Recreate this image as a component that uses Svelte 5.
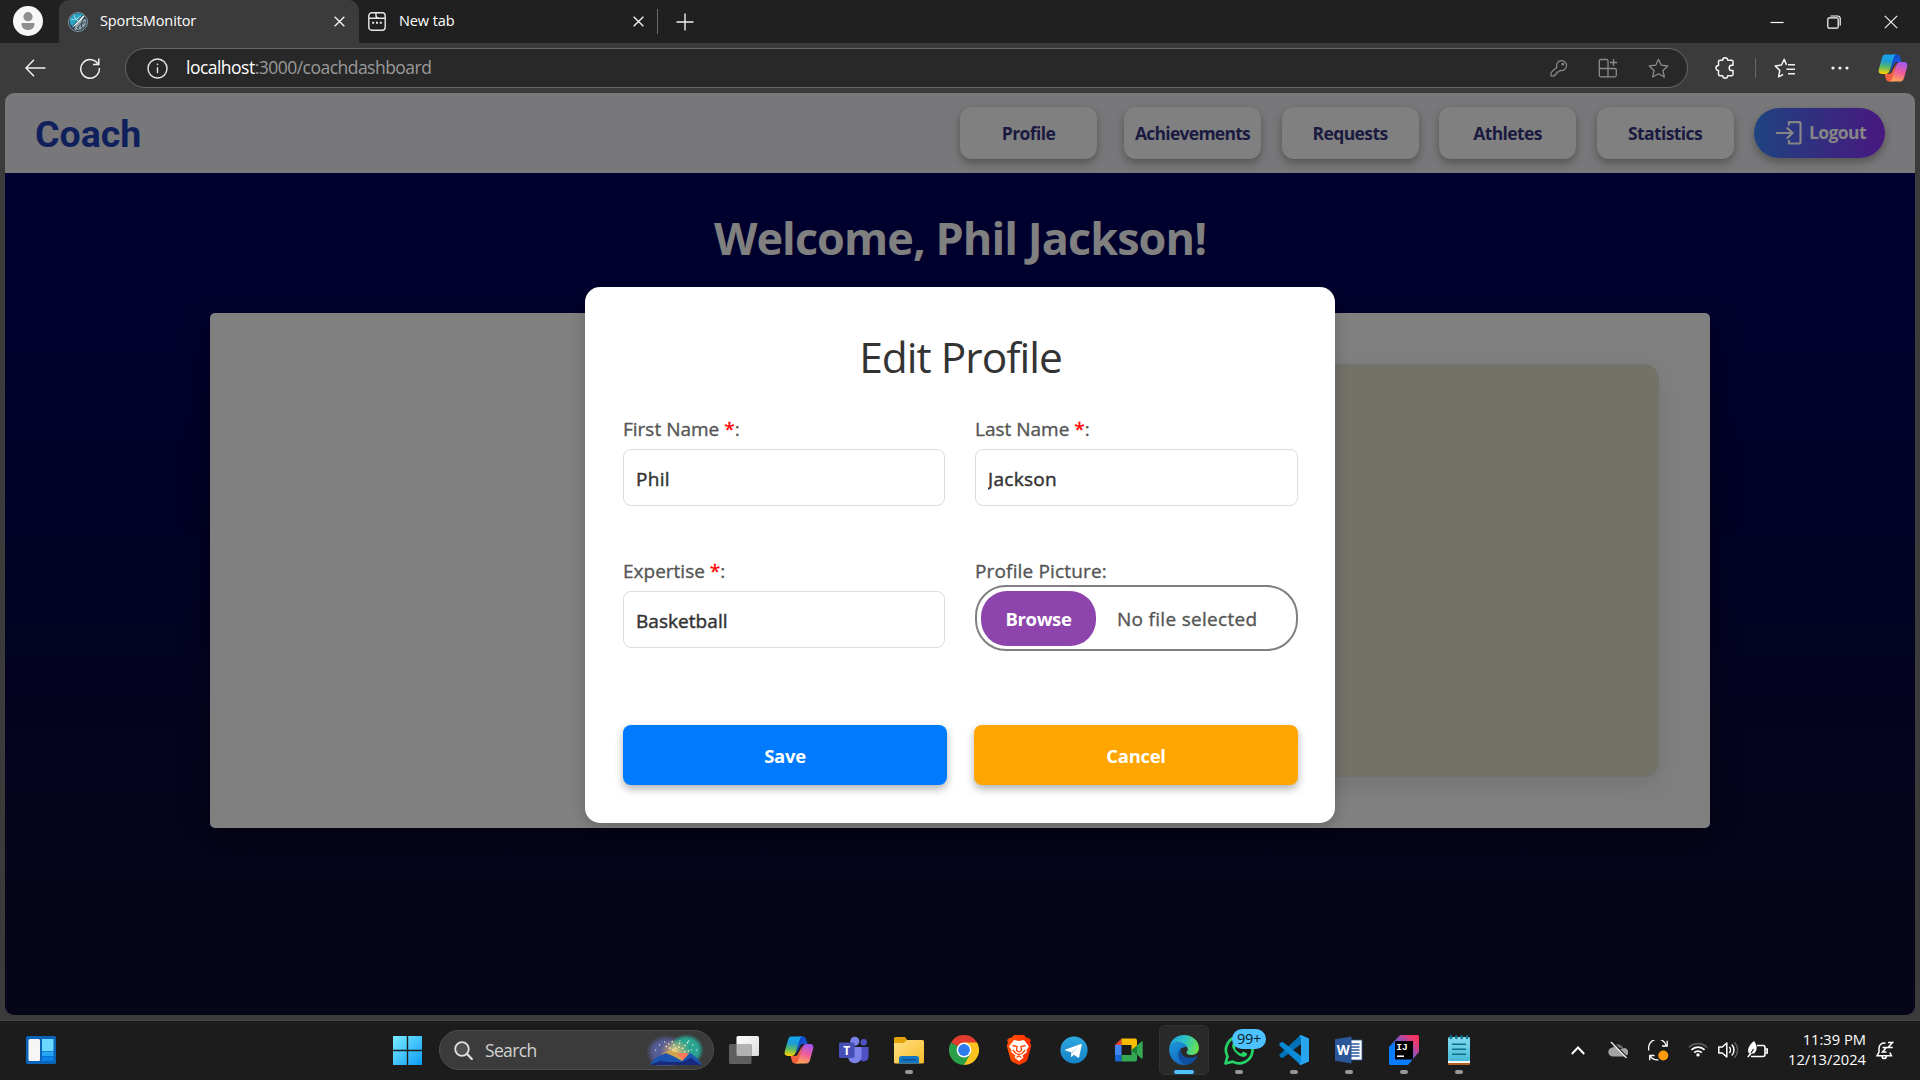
<script>
  const navItems = ['Profile', 'Achievements', 'Requests', 'Athletes', 'Statistics'];

  let firstName = $state('Phil');
  let lastName = $state('Jackson');
  let expertise = $state('Basketball');

  const apps = [
    { id: 'taskview' },
    { id: 'copilot' },
    { id: 'teams' },
    { id: 'explorer', open: true },
    { id: 'chrome' },
    { id: 'brave' },
    { id: 'telegram' },
    { id: 'meet' },
    { id: 'edge', open: true, active: true },
    { id: 'whatsapp', open: true, badge: '99+' },
    { id: 'vscode', open: true },
    { id: 'word', open: true },
    { id: 'intellij', open: true },
    { id: 'notepad', open: true }
  ];
</script>

{#snippet closeIcon(size, w)}
  <svg width={size} height={size} viewBox="0 0 12 12" fill="none" stroke="#f2f2f2" stroke-width={w}>
    <path d="M.7.7l10.6 10.6M11.3.7L.7 11.3" />
  </svg>
{/snippet}

{#snippet copilot(key)}
  <svg width="30" height="28" viewBox="0 0 30 28">
    <defs>
      <linearGradient id="{key}-a" x1=".4" y1="0" x2=".3" y2="1">
        <stop offset="0" stop-color="#12a5f3" /><stop offset=".35" stop-color="#1f9bd0" />
        <stop offset=".65" stop-color="#5cbb62" /><stop offset="1" stop-color="#ffd200" />
      </linearGradient>
      <linearGradient id="{key}-b" x1=".7" y1="0" x2=".4" y2="1">
        <stop offset="0" stop-color="#a157f0" /><stop offset=".5" stop-color="#ef5c9e" /><stop offset="1" stop-color="#ffa455" />
      </linearGradient>
      <linearGradient id="{key}-c" x1="0" y1="0" x2="1" y2="1">
        <stop offset="0" stop-color="#0a3fc0" /><stop offset="1" stop-color="#2368e8" />
      </linearGradient>
    </defs>
    <path d="M15 .6h4c1.800 0 2.700 1.200 3.200 3l1.200 4.400H19c-2 0-3 1.300-3.600 3.200L12 18z" fill="url(#{key}-c)" />
    <path d="M15 27.400h-4c-1.800 0-2.700-1.200-3.200-3L6.600 20H11c2 0 3-1.300 3.600-3.200L18 10z" fill="#f4603f" />
    <path d="M7.500.6H19c-2 0-2.900 1.600-3.500 3.600L11.900 16c-.8 2.700-2 3.900-4.500 3.900H3.800c-2.500 0-3.700-1.900-3-4.700L4 4C4.700 1.700 5.600.6 7.500.6z" fill="url(#{key}-a)" />
    <path d="M22.500 27.400H11c2 0 2.900-1.600 3.500-3.600L18.100 12c.8-2.700 2-3.900 4.500-3.900h3.600c2.500 0 3.700 1.900 3 4.700L26 24c-.7 2.300-1.600 3.400-3.500 3.400z" fill="url(#{key}-b)" />
  </svg>
{/snippet}

{#snippet appIcon(id)}
  {#if id === 'taskview'}
    <svg width="30" height="30" viewBox="0 0 30 30">
      <defs><linearGradient id="tv" x1="0" y1="0" x2="1" y2="1"><stop offset="0" stop-color="#fff" /><stop offset="1" stop-color="#dcdcdc" /></linearGradient></defs>
      <rect x="7.500" y="1" width="22.500" height="20" rx="1.500" fill="url(#tv)" />
      <rect x="0" y="9" width="22.500" height="20" rx="1.500" fill="#5e5e5e" />
      <path d="M7.500 9h13.500a1.500 1.500 0 0 1 1.500 1.500V21H9a1.500 1.500 0 0 1-1.500-1.500z" fill="#b2b2b2" />
    </svg>
  {:else if id === 'copilot'}
    {@render copilot('tb')}
  {:else if id === 'teams'}
    <svg width="30" height="30" viewBox="0 0 30 30">
      <circle cx="24.700" cy="7.300" r="3.200" fill="#4f52c4" />
      <path d="M21 12h8.500v9.500a5 5 0 0 1-8.500 3.500z" fill="#4f52c4" />
      <circle cx="15.800" cy="6.300" r="4.500" fill="#7b83eb" />
      <path d="M9 12h13.500v9.500a6.700 6.700 0 0 1-13.500 0z" fill="#7b83eb" />
      <rect x="0" y="7.500" width="15.500" height="15.500" rx="1.400" fill="#464eb8" />
      <text x="7.700" y="19.800" text-anchor="middle" font-size="12" font-weight="700" fill="#fff">T</text>
    </svg>
  {:else if id === 'explorer'}
    <svg width="30" height="30" viewBox="0 0 30 30">
      <defs><linearGradient id="fe" x1="0" y1="0" x2="1" y2="1"><stop offset="0" stop-color="#ffe084" /><stop offset="1" stop-color="#f7bd2b" /></linearGradient></defs>
      <path d="M0 3.500A1.500 1.500 0 0 1 1.500 2h8.300c1 0 1.500.4 2 1l1.700 2.500V10H0z" fill="#e3a20b" />
      <path d="M0 8h9.500L13 5h15.500A1.500 1.500 0 0 1 30 6.500V27a1.500 1.500 0 0 1-1.500 1.500h-27A1.500 1.500 0 0 1 0 27z" fill="url(#fe)" />
      <path d="M5 28.500V23.500a2.500 2.500 0 0 1 2.500-2.500h15a2.500 2.500 0 0 1 2.500 2.500v5z" fill="#1577c2" />
      <path d="M8.500 24.800h13" stroke="#0b4a80" stroke-width="1.200" />
    </svg>
  {:else if id === 'chrome'}
    <svg width="30" height="30" viewBox="0 0 30 30">
      <path d="M15 15L2 7.500A15 15 0 0 1 28 7.500z" fill="#e33b2e" />
      <path d="M15 15V7.500h13A15 15 0 0 1 15 30z" fill="#fcc31e" />
      <path d="M2 7.500A15 15 0 0 0 15 30l6.500-11.200L15 15z" fill="#2b9e49" />
      <circle cx="15" cy="15" r="7.400" fill="#fff" />
      <circle cx="15" cy="15" r="5.900" fill="#2f7cf0" />
    </svg>
  {:else if id === 'brave'}
    <svg width="26" height="30" viewBox="0 0 26 30">
      <defs><linearGradient id="br"><stop offset="0" stop-color="#ff5500" /><stop offset="1" stop-color="#ff2a00" /></linearGradient></defs>
      <path d="M8 0h10l2.600 2.800c2-.3 3.200.9 4.300 2.200L24 7.500l1.300 3.300-3.800 13.400c-.5 1.500-1.500 2.300-2.600 3L13 30l-5.900-2.800c-1.100-.7-2.100-1.500-2.600-3L.7 10.800 2 7.500 1.100 5C2.200 3.700 3.400 2.500 5.400 2.800z" fill="url(#br)" />
      <path d="M8 5l5 1 5-1 5 6.500-2.500 3.500.5 2-4.500 3.500 1 2L13 26l-4.500-3.500 1-2L5 17l.5-2L3 11.500z" fill="#fff" />
      <path d="M6.500 10.500l4.500 1-.5 4 2.500 1.500 2.500-1.500-.5-4 4.500-1M6.700 15l3.300 3.500 3 1 3-1 3.300-3.500M10.500 22.500l2.500-1.500 2.500 1.500" fill="none" stroke="#ff4200" stroke-width="1.300" />
    </svg>
  {:else if id === 'telegram'}
    <svg width="28" height="28" viewBox="0 0 28 28">
      <defs><linearGradient id="tg" x1="0" y1="0" x2="0" y2="1"><stop offset="0" stop-color="#2fa8e0" /><stop offset="1" stop-color="#1583c6" /></linearGradient></defs>
      <circle cx="14" cy="14" r="13.600" fill="url(#tg)" />
      <path d="M5.500 13.600L20.700 8c.7-.2 1.200.2 1 1l-2.500 12c-.2.800-.7 1-1.400.6l-3.900-2.900-1.900 1.900c-.6.500-1 .3-1-.3v-4.100l-5.400-1.600c-.6-.2-.7-.7-.1-1z" fill="#fff" />
      <path d="M11 16.200l7.500-5.500-6 6.400-.9 3z" fill="#bcdcf0" />
    </svg>
  {:else if id === 'meet'}
    <svg width="28" height="24" viewBox="0 0 28 24">
      <path d="M6.500.5V7H0z" fill="#ea4335" /><path d="M0 7h6.500v10H0z" fill="#4285f4" />
      <path d="M0 17h6.500v6.500h-5A1.500 1.500 0 0 1 0 22z" fill="#1a66d2" />
      <path d="M6.500.5H20a2 2 0 0 1 2 2V10l-5.500 3V7h-10z" fill="#fbbc04" />
      <path d="M6.500 17h10v-6l5.500 3v7.500a2 2 0 0 1-2 2H6.500z" fill="#34a853" />
      <path d="M16.500 12l5.500-4.500V17z" fill="#188038" />
      <path d="M22 7.500l4.400-4c.7-.5 1.300-.2 1.300.6v15.800c0 .8-.6 1.100-1.300.6L22 16.500z" fill="#34a853" />
    </svg>
  {:else if id === 'edge'}
    <svg width="30" height="30" viewBox="0 0 30 30">
      <defs>
        <linearGradient id="eg1" x1="0" y1=".3" x2="1" y2=".5"><stop offset="0" stop-color="#239ede" /><stop offset=".5" stop-color="#2cc3c6" /><stop offset="1" stop-color="#6be14d" /></linearGradient>
        <linearGradient id="eg2" x1="0" y1="0" x2=".5" y2="1"><stop offset="0" stop-color="#1b9be0" /><stop offset="1" stop-color="#1466bd" /></linearGradient>
      </defs>
      <path d="M.2 13.500C.8 5.800 7 0 15 0c8.500 0 15 6 15 13 0 4.500-3.500 7-7.500 7-3.500 0-5-1.400-5-2.300 0-.8 1.300-1.400 1.300-3.400C18.800 10.500 14 7.500 9.500 7.500 4.500 7.500 1.200 10.200.2 13.500z" fill="url(#eg1)" />
      <path d="M.1 14C1 10 4.500 7.500 9.500 7.500c4 0 7.800 2 9 5-5-2-9 2.500-9 6.500 0 5.500 4.500 10.500 9.800 10.500-1.500.5-2.800.5-4.300.5C6.500 30 0 23 .1 14z" fill="url(#eg2)" />
      <path d="M13 13.300c-2 1.300-3.500 3.300-3.500 6 0 5.500 4 10.200 9.800 10.200 4-1.300 7-4 8.800-7.200.4-.7-.2-1.200-.9-.8-5.500 2.900-14.500 1.200-15.200-5-.1-1.300.2-2.300 1-3.200z" fill="#0f4f9f" />
    </svg>
  {:else if id === 'whatsapp'}
    <svg width="30" height="30" viewBox="0 0 30 30">
      <path d="M1.500 28.500l2-7.200A13.300 13.300 0 1 1 8.700 26.600z" fill="none" stroke="#25d366" stroke-width="2.700" stroke-linejoin="round" />
      <path d="M10 7.500c-2 1-2.500 3.500-1.200 6 2.200 4.200 5.600 7.200 9.500 8.300 2.700.6 4.700-.9 4.900-3.300l-4-2-2 2.200c-3-1-5.200-3-6.300-5.700l1.500-1.900z" fill="#25d366" />
    </svg>
  {:else if id === 'vscode'}
    <svg width="30" height="30" viewBox="0 0 30 30">
      <path d="M22 0v9L3.500 23.300.5 21.500v-2L21 .5z" fill="#0072b8" />
      <path d="M22 30v-9L3.500 6.700.5 8.500v2L21 29.500z" fill="#0b8ad6" />
      <path d="M22 0l8 3.500v23L22 30c-.8 0-1.400-.4-1.700-.9l1.700-2V3L20.300.9z" fill="#27a5ee" />
    </svg>
  {:else if id === 'word'}
    <svg width="28" height="28" viewBox="0 0 28 28">
      <rect x="14" y="4" width="13" height="20" fill="#fff" stroke="#2b579a" stroke-width=".8" />
      <path d="M15 8h9.500M15 11h9.500M15 14h9.500M15 17h9.500M15 20h9.500" stroke="#2b579a" stroke-width="1.300" />
      <path d="M0 3.300L16.500.5v27L0 24.700z" fill="#2b579a" />
      <text x="8.200" y="19" text-anchor="middle" font-size="13.500" font-weight="700" fill="#fff">W</text>
    </svg>
  {:else if id === 'intellij'}
    <svg width="30" height="30" viewBox="0 0 30 30">
      <defs><linearGradient id="ij" x1="1" y1="0" x2="0" y2="1"><stop offset="0" stop-color="#ff2d4f" /><stop offset=".2" stop-color="#e43a78" /><stop offset=".45" stop-color="#7c56c6" /><stop offset=".6" stop-color="#0a7dff" /></linearGradient></defs>
      <path d="M11 0h17.500A1.500 1.500 0 0 1 30 1.500V17L19 30H1.500A1.500 1.500 0 0 1 0 28.500V12z" fill="url(#ij)" />
      <rect x="6" y="6" width="18" height="18.500" fill="#000" />
      <text class="mono" x="7.300" y="15.200" font-size="9.500" font-weight="700" fill="#fff">IJ</text>
      <path d="M8 21.200h7" stroke="#fff" stroke-width="1.500" />
    </svg>
  {:else}
    <svg width="24" height="30" viewBox="0 0 24 30">
      <defs><linearGradient id="np" x1="0" y1="0" x2="0" y2="1"><stop offset="0" stop-color="#84dcee" /><stop offset="1" stop-color="#45b9d6" /></linearGradient></defs>
      <rect x="1" y="25" width="22" height="5" rx="1" fill="#b0601b" />
      <rect x="1" y="24" width="22" height="4" fill="#f5f5f5" />
      <rect x="1" y="2" width="22" height="24" rx="1.500" fill="url(#np)" />
      <path d="M5 9.200h14M5 14.200h14M5 19.200h14" stroke="#0e6e8c" stroke-width="1.500" />
      <path d="M4 1.200v1.800M9.300 1.200v1.800M14.700 1.200v1.800M20 1.200v1.800" stroke="#0e6e8c" stroke-width="2.400" stroke-linecap="round" />
    </svg>
  {/if}
{/snippet}

<div class="desktop">
  <div class="tabstrip">
    <div class="avatar">
      <svg width="30" height="30" viewBox="0 0 30 30">
        <circle cx="15" cy="15" r="15" fill="#f7f7f7" />
        <circle cx="15" cy="10.700" r="4.600" fill="#8f8f8f" />
        <path d="M8.500 17h13c.3 4.500-2.500 7-6.500 7s-6.800-2.500-6.500-7z" fill="#8f8f8f" />
      </svg>
    </div>
    <div class="tab active">
      <svg width="20" height="20" viewBox="0 0 20 20">
        <circle cx="10" cy="10" r="9.500" fill="#1b3644" stroke="#9fb4be" stroke-width=".8" />
        <path d="M2 7A8.500 8.500 0 0 1 15 2.800L4 14.500A8.500 8.500 0 0 1 2 7z" fill="#2aa3c4" />
        <path d="M2.500 7c3 1 7 .5 10-3M6 2.800c.5 3 2 5 4 6" stroke="#bfeaf5" stroke-width=".8" fill="none" />
        <path d="M3.500 16L15.500 3.200l1 1.300L10 12z" fill="#fff" />
        <path d="M6 17.200c1-4 5-9 11.500-10.700.9 2.500.9 4.500.2 6.300C15.500 17 11 19.500 6 17.200z" fill="#8ea1aa" />
        <path d="M10 17.500c0-4 2-6 7.500-7M14 16c-1-3-.5-6 1.500-8.500" stroke="#20343e" stroke-width=".9" fill="none" />
      </svg>
      <span class="tab-title sports">SportsMonitor</span>
      <span class="tab-close">{@render closeIcon(11, 1.5)}</span>
    </div>
    <div class="tab">
      <svg width="18" height="19" viewBox="0 0 18 19" fill="none" stroke="#e8e8e8" stroke-width="1.400">
        <rect x=".8" y=".8" width="16.400" height="17.400" rx="3" />
        <path d="M1 6.200h16M8 1v2.500a2.500 2.500 0 0 0 2.500 2.500" />
        <path d="M4.200 10.800h2M8 10.800h2M11.800 10.800h2" stroke-width="2" />
      </svg>
      <span class="tab-title newtab">New tab</span>
      <span class="tab-close">{@render closeIcon(11, 1.5)}</span>
    </div>
    <i class="tab-sep"></i>
    <svg class="plus" width="18" height="18" viewBox="0 0 18 18" stroke="#f0f0f0" stroke-width="1.400"><path d="M9 .5v17M.5 9h17" /></svg>
    <div class="window-controls">
      <svg width="14" height="14" viewBox="0 0 14 14"><path d="M.5 7.500h13" stroke="#fff" stroke-width="1.200" /></svg>
      <svg width="14" height="14" viewBox="0 0 14 14" fill="none" stroke="#fff" stroke-width="1.200"><rect x=".8" y="2.800" width="10.400" height="10.400" rx="1.500" /><path d="M3.500 1h7.200A2.500 2.500 0 0 1 13.200 3.500v7" /></svg>
      {@render closeIcon(14, 1)}
    </div>
  </div>

  <div class="toolbar">
    <svg class="back" width="21" height="18" viewBox="0 0 21 18" fill="none" stroke="#f0f0f0" stroke-width="1.500"><path d="M9 .8L1 9l8 8.200M1 9h19.500" /></svg>
    <svg class="reload" width="22" height="22" viewBox="0 0 22 22" fill="none" stroke="#f0f0f0" stroke-width="1.500"><path d="M19.500 8A9.300 9.300 0 1 0 20.300 11M19.800 1.500V7.500H14" /></svg>
    <div class="address">
      <svg width="21" height="21" viewBox="0 0 21 21" fill="none" stroke="#e8e8e8" stroke-width="1.400"><circle cx="10.500" cy="10.500" r="9.500" /><path d="M10.500 9.200v6" /><circle cx="10.500" cy="6.300" r=".5" fill="#e8e8e8" stroke-width=".8" /></svg>
      <span class="url"><b>localhost</b>:3000/coachdashboard</span>
      <span class="address-icons">
        <svg width="18" height="18" viewBox="0 0 18 18" fill="none" stroke="#8b8b8b" stroke-width="1.200"><path d="M6.800 8.200a5 5 0 1 1 3.400 3.200L8.500 13H6.800v2H5v1.800H1v-3.200z" stroke-linejoin="round" /><circle cx="12.800" cy="5.200" r=".8" fill="#8b8b8b" /></svg>
        <svg width="20" height="20" viewBox="0 0 20 20" fill="none" stroke="#8b8b8b" stroke-width="1.300"><path d="M10 10.500V3a1.500 1.500 0 0 0-1.500-1.500H2.800A1.500 1.500 0 0 0 1.300 3v14.300a1.500 1.500 0 0 0 1.500 1.500h14a1.500 1.500 0 0 0 1.500-1.500V12a1.500 1.500 0 0 0-1.500-1.500zM1.300 10.500H10v8.300M15.500 1v7M12 4.500h7" /></svg>
        <svg width="21" height="21" viewBox="0 0 21 21" fill="none" stroke="#8b8b8b" stroke-width="1.300" stroke-linejoin="round"><path d="M10.500 1.200l2.800 6 6.500.8-4.800 4.500 1.300 6.500-5.800-3.200L4.700 19 6 12.500 1.200 8l6.500-.8z" /></svg>
      </span>
    </div>
    <svg class="puzzle" width="20" height="22" viewBox="0 0 20 22" fill="none" stroke="#f2f2f2" stroke-width="1.500" stroke-linejoin="round"><path d="M7.700 3.200a2.500 2.500 0 0 1 5 0h3.800a1.500 1.500 0 0 1 1.500 1.500v3.600h-1.200a2.600 2.600 0 0 0 0 5.200H18v3.800a1.500 1.500 0 0 1-1.500 1.500h-3.800a2.500 2.500 0 0 1-5 0H5a1.500 1.500 0 0 1-1.500-1.500v-3.800a2.500 2.500 0 0 1 0-5V4.700A1.500 1.500 0 0 1 5 3.200z" /></svg>
    <i class="bar-sep"></i>
    <svg class="favs" width="22" height="21" viewBox="0 0 22 21" fill="none" stroke="#f2f2f2" stroke-width="1.500" stroke-linejoin="round"><path d="M12.500 6.900L10.200 1.300 7.500 7l-6.300.9 4.600 4.500-1.200 6.400 4.500-2.300M14 6.800h7M12.500 11.300H21M14 15.800h7" /></svg>
    <svg class="dots" width="18" height="4" viewBox="0 0 18 4" fill="#f2f2f2"><circle cx="2" cy="2" r="1.600" /><circle cx="9" cy="2" r="1.600" /><circle cx="16" cy="2" r="1.600" /></svg>
    <span class="side-copilot">{@render copilot('side')}</span>
  </div>

  <div class="viewport">
    <header>
      <h1>Coach</h1>
      <nav>
        {#each navItems as item}
          <button class={item.toLowerCase()}>{item}</button>
        {/each}
        <button class="logout">
          <svg width="26" height="24" viewBox="0 0 26 24" fill="none" stroke="#868686" stroke-width="2.200"><path d="M13 4.500V1.200h10.500q1 0 1 1v19.300q0 1-1 1H13V19M0 12h16M10.800 6.500l5.700 5.500-5.700 5.500" /></svg>
          <span>Logout</span>
        </button>
      </nav>
    </header>
    <main>
      <h2>Welcome, Phil Jackson!</h2>
      <section class="panel"><div class="card"></div></section>
    </main>

    <div class="modal">
      <h3>Edit Profile</h3>
      <form onsubmit={(e) => e.preventDefault()}>
        <label class="field">
          <span class="label">First Name <em>*</em>:</span>
          <input bind:value={firstName} />
        </label>
        <label class="field">
          <span class="label">Last Name <em>*</em>:</span>
          <input bind:value={lastName} />
        </label>
        <label class="field">
          <span class="label">Expertise <em>*</em>:</span>
          <input class="expertise" bind:value={expertise} />
        </label>
        <div class="field">
          <span class="label picture">Profile Picture:</span>
          <div class="file">
            <button type="button">Browse</button>
            <span>No file selected</span>
          </div>
        </div>
        <div class="actions">
          <button class="save">Save</button>
          <button class="cancel" type="button">Cancel</button>
        </div>
      </form>
    </div>
  </div>

  <div class="taskbar">
    <svg class="widgets" width="30" height="28" viewBox="0 0 30 28">
      <rect width="30" height="28" rx="1.500" fill="#0b64b8" />
      <rect x="2.500" y="3" width="11.500" height="22" rx="1.500" fill="#f6f6f6" />
      <path d="M16 3h11.500v12H16z" fill="#6bd8ff" /><path d="M16 15.500h11.500v4.500H16z" fill="#26a5f5" /><path d="M16 20.500h11.500V25H16z" fill="#0a84e8" />
    </svg>
    <svg class="start" width="29" height="29" viewBox="0 0 29 29">
      <defs><linearGradient id="win" x1="0" y1="0" x2="1" y2="1"><stop offset="0" stop-color="#7aecff" /><stop offset="1" stop-color="#0c9bf9" /></linearGradient></defs>
      <path d="M0 0h13.800v13.800H0zM15.200 0H29v13.800H15.200zM0 15.200h13.800V29H0zM15.200 15.200H29V29H15.200z" fill="url(#win)" />
    </svg>
    <div class="search">
      <svg width="19" height="19" viewBox="0 0 19 19" fill="none" stroke="#e2e2e2" stroke-width="1.800"><circle cx="8" cy="8" r="6.800" fill="#505050" /><path d="M12.800 12.800l5 5.200" stroke-width="2.200" stroke-linecap="round" /></svg>
      <span>Search</span>
      <svg class="scene" width="58" height="32" viewBox="0 0 58 32">
        <defs>
          <radialGradient id="glow1"><stop offset=".65" stop-color="#565c94" /><stop offset="1" stop-color="#565c94" stop-opacity="0" /></radialGradient>
          <radialGradient id="glow2"><stop offset=".7" stop-color="#2aa592" /><stop offset="1" stop-color="#2aa592" stop-opacity="0" /></radialGradient>
          <radialGradient id="glow3"><stop offset="0" stop-color="#f3cd78" /><stop offset="1" stop-color="#d9a35f" stop-opacity="0" /></radialGradient>
        </defs>
        <ellipse cx="20" cy="18" rx="20" ry="17" fill="url(#glow1)" />
        <ellipse cx="40" cy="16" rx="18" ry="16" fill="url(#glow2)" />
        <ellipse cx="29" cy="17" rx="15" ry="12" fill="url(#glow3)" />
        <path d="M12 24c5-5 8-7 12-7l14 3 6 3v5H12z" fill="#d2a24e" />
        <path d="M37 27l-6-8h12z" fill="#ff7a5c" />
        <path d="M4 31c2-4 5-7 9-9l7-3 9 4 7 4 8-8c4 2 9 7 12 12z" fill="#1c55b0" />
        <path d="M4 31l10-4 10 1h12l9-4 10 7z" fill="#172a7e" />
        <path d="M30 15l-4-8M28 16l-9-4M33 14l1-8M36 15l6-7M38 18l8-2" stroke="#fff3c5" stroke-width="1.300" stroke-dasharray="1.600 2.200" />
        <path d="M9 16h1.200M13 11h1.200M18 8h1.200M46 11h1.200M50 16h1.200M42 7h1.200M22 10h1.200" stroke="#fff" stroke-width="1.200" />
      </svg>
    </div>
    <div class="apps">
      {#each apps as app}
        <div class="app" class:current={app.active}>
          {@render appIcon(app.id)}
          {#if app.badge}<span class="badge">{app.badge}</span>{/if}
          {#if app.open}<i class="running"></i>{/if}
        </div>
      {/each}
    </div>
    <div class="tray">
      <svg class="chevron" width="14" height="9" viewBox="0 0 14 9" fill="none" stroke="#fff" stroke-width="1.900"><path d="M.8 8L7 1.500 13.200 8" /></svg>
      <svg class="cloud" width="20" height="18" viewBox="0 0 20 18">
        <path d="M4.500 7A5.600 5.600 0 0 1 15 7z" fill="#6b6b6b" />
        <path d="M5 15.500a4.500 4.500 0 0 1-.4-9c2-.5 4 .5 5.400 2l6-1.500a4.200 4.200 0 0 1 0 8.500z" fill="#a3a3a3" />
        <path d="M4 1l15 15.500" stroke="#1c1c1c" stroke-width="2" /><path d="M3 1l15.500 16" stroke="#fff" stroke-width="1.100" />
      </svg>
      <svg class="sync" width="21" height="21" viewBox="0 0 21 21" fill="none" stroke="#fff" stroke-width="1.300">
        <path d="M1 10.500A8.800 8.800 0 0 1 18.200 5.500M19.200.8V6H14M6.500 15.500H1.700v4.700M2 15.800a9 9 0 0 0 8.500 4" /><circle cx="15.300" cy="15.500" r="5" fill="#ff9a0d" stroke="none" />
      </svg>
      <svg class="wifi" width="20" height="16" viewBox="0 0 20 16" fill="none" stroke="#fff" stroke-width="1.700">
        <path d="M.8 6.500a13 13 0 0 1 18.400 0" stroke="#5a5a5a" /><path d="M3.400 8.900a9.200 9.200 0 0 1 13.200 0M6.200 11.600a5.400 5.400 0 0 1 7.600 0" /><circle cx="10" cy="13.900" r="1.700" fill="#fff" stroke="none" />
      </svg>
      <svg class="sound" width="21" height="18" viewBox="0 0 21 18" fill="none" stroke="#fff" stroke-width="1.500">
        <path d="M.8 6h3.500l4.500-4v14l-4.500-4H.8z" stroke-linejoin="round" /><path d="M11.300 6a4.400 4.400 0 0 1 0 6M13.800 3.500a8 8 0 0 1 0 11" /><path d="M16.300 1.200a11 11 0 0 1 0 15.600" stroke="#5a5a5a" />
      </svg>
      <svg class="battery" width="21" height="18" viewBox="0 0 21 18" fill="none" stroke="#fff" stroke-width="1.600">
        <path d="M10 4.500h6a2 2 0 0 1 2 2v7a2 2 0 0 1-2 2H4" /><path d="M18.500 8h1.700v4h-1.700" /><path d="M7 0c3 3.500 4 9 0 12.500H2C-.5 9 2 4 7 0z" fill="#fff" stroke="none" /><path d="M2.500 14.500L6.500 8" stroke="#1c1c1c" stroke-width="1.200" /><path d="M.8 16l3.500-4" />
      </svg>
      <div class="clock"><span>11:39 PM</span><span>12/13/2024</span></div>
      <svg class="bell" width="18" height="19" viewBox="0 0 18 19" fill="none" stroke="#fff" stroke-width="1.500">
        <path d="M9.500 2.200C5.500 1.500 3 4 3 7.500V11L1 14.800h14.500L13.800 11.500M6 15.500c.5 2.800 4 2.800 4.500 0" /><path d="M6.500 6.500h3.800l-3.800 4.500h4M12 1.500h4.500L12 6.500h4.800" />
      </svg>
    </div>
  </div>
</div>

<style>
  :global(body) { margin: 0; background: #1c1c1c; overflow: hidden; }
  .desktop { width: 1920px; height: 1080px; display: flex; flex-direction: column; background: #3b3b3b; font-family: 'Open Sans', 'Noto Sans', sans-serif; overflow: hidden; }
  svg { display: block; flex: none; }
  .mono { font-family: 'Liberation Mono', monospace; }
  button, input { font: inherit; border: 0; margin: 0; padding: 0; box-sizing: border-box; }
  i { display: block; flex: none; }

  .tabstrip { height: 43px; flex: none; display: flex; align-items: center; background: #202020; }
  .avatar { width: 59px; padding-left: 13px; box-sizing: border-box; padding-bottom: 2px; flex: none; }
  .tab { width: 298px; height: 43px; flex: none; box-sizing: border-box; display: flex; align-items: center; padding: 0 12px 0 9px; color: #fff; font-size: 14.5px; }
  .tab.active { width: 300px; padding: 0 14px 0 9px; background: #3b3b3b; border-radius: 10px 10px 0 0; }
  .tab-title { margin-left: 12px; padding-bottom: 2px; white-space: nowrap; }
  .sports { letter-spacing: -0.12px; }
  .newtab { letter-spacing: -0.1px; margin-left: 13px; }
  .tab-close { margin-left: auto; }
  .tab:not(.active) .tab-close { margin-right: 1px; }
  .tab-sep { width: 1px; height: 25px; background: #6a6a6a; }
  .plus { margin-left: 18px; }
  .window-controls { margin-left: auto; margin-right: 22px; display: flex; gap: 43px; }

  .toolbar { height: 50px; flex: none; display: flex; align-items: center; }
  .back { margin-left: 25px; margin-bottom: 1px; }
  .reload { margin-left: 33px; margin-bottom: 1px; }
  .address { margin-left: 24px; width: 1563px; height: 40px; box-sizing: border-box; border: 1px solid #686868; border-radius: 20px; background: #282828; display: flex; align-items: center; padding: 0 18px 0 21px; }
  .url { margin-left: 18px; color: #9a9a9a; font-size: 17.500px; letter-spacing: -0.52px; padding-bottom: 3px; }
  .url b { color: #fff; font-weight: 400; }
  .address-icons { margin-left: auto; display: flex; align-items: center; gap: 30px; }
  .puzzle { margin-left: 27px; }
  .bar-sep { width: 1px; height: 20px; background: #666; margin-left: 20px; }
  .favs { margin-left: 18px; }
  .dots { margin-left: 35px; }
  .side-copilot { margin-left: 29px; }

  .viewport { position: relative; margin: 0 5px; height: 922px; flex: none; border-radius: 9px; overflow: hidden; display: flex; flex-direction: column; }
  header { height: 80px; flex: none; box-sizing: border-box; display: flex; align-items: center; justify-content: space-between; padding: 0 30px 0 30px; background: #78787a; }
  h1 { margin: 0; padding-top: 1px; font: 700 37.500px Roboto, sans-serif; color: #10205c; }
  nav { display: flex; gap: 20.500px; align-items: center; }
  nav button { width: 137px; height: 52px; border-radius: 12px; background: #808080; color: #1a1a40; font-size: 17.500px; font-weight: 700; letter-spacing: -0.6px; box-shadow: 0 4px 8px rgba(0, 0, 0, 0.3); }
  nav .achievements { letter-spacing: -0.72px; }
  nav .profile { margin-right: 6.500px; }
  nav .logout { width: 131px; height: 50px; border-radius: 25px; color: #868686; background: linear-gradient(90deg, #1f4380, #481780); display: flex; align-items: center; padding: 0 0 0 22px; gap: 7px; }
  .logout span { padding-bottom: 3px; }
  main { flex: 1; display: flex; flex-direction: column; align-items: center; background: linear-gradient(#00002e, #00002c 20%, #05051a 85%, #060618); }
  h2 { margin: 32px 0 0; height: 66px; line-height: 66px; font-size: 45px; font-weight: 700; color: #808080; letter-spacing: -0.94px; white-space: nowrap; }
  .panel { margin-top: 42px; width: 1500px; height: 515px; border-radius: 5px; background: #808080; box-sizing: border-box; padding: 51px 51px 51px 0; display: flex; justify-content: flex-end; box-shadow: 0 10px 30px rgba(0, 0, 0, 0.4); }
  .card { width: 676px; border-radius: 15px; background: #727269; box-shadow: 0 8px 24px rgba(0, 0, 0, 0.1); }

  .modal { position: absolute; left: 580px; top: 194px; width: 750px; height: 536px; box-sizing: border-box; padding: 37px 37px 0 38px; border-radius: 15px; background: #fff; box-shadow: 0 4px 15px rgba(0, 0, 0, 0.2); }
  h3 { margin: 0; height: 67px; line-height: 66px; text-align: center; font-size: 42.500px; font-weight: 400; color: #333; letter-spacing: -1px; }
  form { display: grid; grid-template-columns: 322px 323px; column-gap: 30px; }
  .field { height: 142px; display: flex; flex-direction: column; }
  .label { height: 58px; flex: none; box-sizing: border-box; padding-top: 24px; line-height: 28px; font-size: 19px; color: #555; -webkit-text-stroke: 0.35px; white-space: nowrap; }
  .picture { letter-spacing: 0.16px; }
  .label em { color: red; font-style: normal; }
  .field input { width: 100%; height: 57px; border: 1px solid #ddd; border-radius: 8px; padding: 3px 12px 0; font-size: 19px; color: #333; background: #fff; outline: none; letter-spacing: 0.3px; -webkit-text-stroke: 0.45px #333; }
  .field .expertise { letter-spacing: 0.05px; }
  .file { margin-top: -6px; height: 66px; flex: none; box-sizing: border-box; border: 2px solid #808080; border-radius: 31px; padding: 4px; display: flex; align-items: center; gap: 21px; font-size: 19px; color: #555; letter-spacing: 0.3px; -webkit-text-stroke: 0.35px; }
  .file button { width: 115px; height: 55px; border-radius: 26px; background: #8e44ad; color: #fff; font-weight: 700; font-size: 18.500px; letter-spacing: -0.4px; -webkit-text-stroke: 0; }
  .file span { padding-top: 1px; }
  .actions { grid-column: 1 / -1; display: grid; grid-template-columns: 1fr 1fr; gap: 27px; padding-top: 50px; }
  .actions button { height: 60px; border-radius: 8px; color: #fff; font-weight: 700; font-size: 18.500px; box-shadow: 0 4px 8px rgba(0, 0, 0, 0.3); letter-spacing: -0.3px; }
  .save { background: #007bff; }
  .cancel { background: #ffa500; }

  .taskbar { margin-top: auto; height: 60px; flex: none; box-sizing: border-box; border-top: 1px solid #444; padding-bottom: 1px; background: #1c1c1c; display: flex; align-items: center; color: #fff; }
  .widgets { margin-left: 26px; }
  .start { margin-left: 337px; }
  .search { margin-left: 17px; width: 275px; height: 40px; box-sizing: border-box; border: 1px solid #4d4d4d; border-radius: 20px; background: #3b3b3b; display: flex; align-items: center; padding: 0 9px 0 14px; font-size: 17.500px; color: #d2d2d2; }
  .search span { margin-left: 12px; letter-spacing: -0.65px; padding-bottom: 1px; }
  .scene { margin-left: auto; }
  .apps { display: flex; gap: 5px; margin-left: 5px; }
  .app { position: relative; width: 50px; height: 50px; box-sizing: border-box; display: flex; align-items: center; justify-content: center; border-radius: 6px; border: 1px solid transparent; }
  .app.current { background: #292929; border-color: #333; }
  .running { position: absolute; bottom: 0; left: 20px; width: 8px; height: 4px; border-radius: 2px; background: #989898; }
  .current .running { left: 14px; width: 20px; background: #4cc2ff; }
  .badge { position: absolute; left: 17px; top: 3px; width: 34px; height: 20px; border-radius: 10px; background: #4cc2ff; color: #0c1a24; font-size: 14.500px; line-height: 19px; text-align: center; letter-spacing: -0.3px; }
  .tray { margin-left: auto; display: flex; align-items: center; padding-right: 26px; }
  .cloud { margin-left: 23px; }
  .sync { margin-left: 20px; }
  .wifi { margin-left: 19px; margin-bottom: 2px; }
  .sound { margin-left: 10px; }
  .battery { margin-left: 8px; }
  .clock { width: 85px; margin-left: 13px; margin-bottom: 2px; display: flex; flex-direction: column; align-items: flex-end; font-size: 14.700px; line-height: 20px; }
  .bell { margin-left: 10px; }
</style>
